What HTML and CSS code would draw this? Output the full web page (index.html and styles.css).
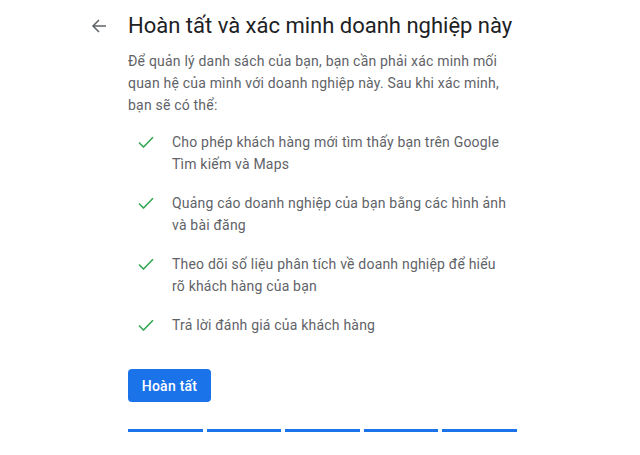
FILE: index.html
```html
<!DOCTYPE html>
<html lang="vi">
<head>
<meta charset="utf-8">
<link rel="stylesheet" href="styles.css">
</head>
<body>
<div class="page">
  <div class="header">
    <span class="back" aria-label="Quay lại">
      <svg width="16" height="16" viewBox="0 0 16 16"><path d="M15 8H2.5M8 2L2 8l6 6" fill="none" stroke="#5f6368" stroke-width="1.5"/></svg>
    </span>
    <h1 class="title">Hoàn tất và xác minh doanh nghiệp này</h1>
  </div>
  <div class="content">
    <p class="intro">Để quản lý danh sách của bạn, bạn cần phải xác minh mối quan hệ của mình với doanh nghiệp này. Sau khi xác minh, bạn sẽ có thể:</p>
    <ul class="list">
      <li class="item"><span class="check"><svg width="16" height="12" viewBox="0 0 16 12"><path d="M1 6.5l4.5 4.5L15 1.2" fill="none" stroke="#34a853" stroke-width="1.6"/></svg></span><span class="text">Cho phép khách hàng mới tìm thấy bạn trên Google Tìm kiếm và Maps</span></li>
      <li class="item"><span class="check"><svg width="16" height="12" viewBox="0 0 16 12"><path d="M1 6.5l4.5 4.5L15 1.2" fill="none" stroke="#34a853" stroke-width="1.6"/></svg></span><span class="text">Quảng cáo doanh nghiệp của bạn bằng các hình ảnh và bài đăng</span></li>
      <li class="item"><span class="check"><svg width="16" height="12" viewBox="0 0 16 12"><path d="M1 6.5l4.5 4.5L15 1.2" fill="none" stroke="#34a853" stroke-width="1.6"/></svg></span><span class="text">Theo dõi số liệu phân tích về doanh nghiệp để hiểu rõ khách hàng của bạn</span></li>
      <li class="item"><span class="check"><svg width="16" height="12" viewBox="0 0 16 12"><path d="M1 6.5l4.5 4.5L15 1.2" fill="none" stroke="#34a853" stroke-width="1.6"/></svg></span><span class="text">Trả lời đánh giá của khách hàng</span></li>
    </ul>
    <button class="btn">Hoàn tất</button>
    <div class="progress">
      <span class="seg"></span><span class="seg"></span><span class="seg"></span><span class="seg"></span><span class="seg"></span>
    </div>
  </div>
</div>
</body>
</html>
```
FILE: styles.css
```css
* { box-sizing: border-box; }
html, body { margin: 0; padding: 0; background: #fff; }
body { font-family: Roboto, "Liberation Sans", Arial, sans-serif; width: 640px; height: 455px; overflow: hidden; }
.page { padding-top: 12px; }
.header { display: flex; align-items: center; padding-left: 91px; }
.back { width: 37px; height: 28px; display: flex; align-items: center; }
.back svg { display: block; }
.title { margin: 0; font-size: 22px; font-weight: 400; line-height: 28px; color: #202124; letter-spacing: 0; }
.content { padding-left: 128px; width: 540px; }
.intro { margin: 10px 0 0; max-width: 380px; font-size: 14px; line-height: 22px; color: #5f6368; letter-spacing: 0.2px; }
.list { list-style: none; margin: 15px 0 0; padding: 0; display: flex; flex-direction: column; gap: 17px; }
.item { display: flex; align-items: flex-start; }
.check { width: 44px; height: 22px; padding-left: 10px; display: flex; align-items: center; flex: none; }
.check svg { display: block; }
.text { font-size: 14px; line-height: 22px; color: #5f6368; letter-spacing: 0.2px; width: 336px; }
.btn { margin-top: 33px; display: block; width: 83px; height: 33px; border: 0; border-radius: 4px; background: #1a73e8; color: #fff; font-family: inherit; font-size: 14px; font-weight: 500; letter-spacing: 0.25px; padding: 0; }
.progress { margin-top: 27px; display: flex; gap: 4px; width: 389px; }
.seg { flex: 1; height: 3px; background: #1a73e8; }
```
